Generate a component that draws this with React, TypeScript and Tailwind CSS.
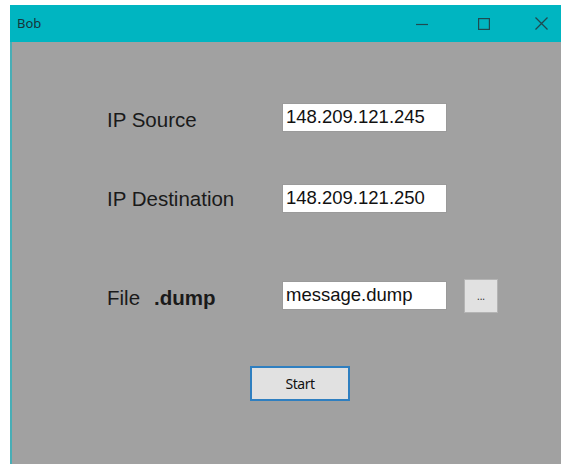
import React from "react";

function TitleButtons() {
  return (
    <div className="flex items-center h-full pr-[13px]">
      {/* minimize */}
      <svg width="12" height="12" viewBox="0 0 12 12">
        <line x1="0" y1="6.5" x2="12" y2="6.5" stroke="#1f4a50" strokeWidth="1.2" />
      </svg>
      {/* maximize */}
      <svg className="ml-[50px]" width="12" height="12" viewBox="0 0 12 12">
        <rect x="0.6" y="0.6" width="10.8" height="10.8" fill="none" stroke="#1f4a50" strokeWidth="1.2" />
      </svg>
      {/* close */}
      <svg className="ml-[45px]" width="13" height="13" viewBox="0 0 13 13">
        <path d="M0.5 0.5 L12.5 12.5 M12.5 0.5 L0.5 12.5" stroke="#1f4a50" strokeWidth="1.3" />
      </svg>
    </div>
  );
}

function TextBox({ value }: { value: string }) {
  return (
    <div className="w-[165px] h-[29px] bg-white border border-[#9a9a9a] flex items-center pl-[3px] text-[18.5px] text-[#111] leading-none" style={{ fontFamily: '"Liberation Sans", Arial, sans-serif' }}>
      {value}
    </div>
  );
}

export default function App() {
  const sans = { fontFamily: '"Liberation Sans", Arial, sans-serif' };
  return (
    <div className="w-[561px] h-[464px] bg-white pl-[10px] pt-[5px] overflow-hidden">
      <div className="flex flex-col h-full">
        {/* title bar */}
        <div className="h-[37px] bg-[#00b5c1] flex items-center justify-between shrink-0">
          <span className="pl-[7px] text-[13px] text-[#17343a]" style={{ fontFamily: '"Noto Sans", "Open Sans", sans-serif' }}>
            Bob
          </span>
          <TitleButtons />
        </div>
        {/* form body */}
        <div className="flex-1 bg-[#a1a1a1] border-l-2 border-[#48aeb6] pl-[95px]" style={sans}>
          <div className="flex items-center h-[29px] mt-[61px]">
            <div className="w-[175px] text-[20.5px] text-[#1a1a1a] leading-none pt-[5px]">IP Source</div>
            <TextBox value="148.209.121.245" />
          </div>
          <div className="flex items-center h-[30px] mt-[51px]">
            <div className="w-[175px] text-[20.5px] text-[#1a1a1a] leading-none pt-[2px]">IP Destination</div>
            <TextBox value="148.209.121.250" />
          </div>
          <div className="flex items-center h-[34px] mt-[66px]">
            <div className="w-[175px] flex items-baseline text-[20.5px] text-[#1a1a1a] leading-none pt-[4px]">
              <span>File</span>
              <span className="ml-[14px] font-bold">.dump</span>
            </div>
            <div className="mt-[-2px]">
              <TextBox value="message.dump" />
            </div>
            <div className="ml-[17px] w-[34px] h-[34px] bg-[#e1e1e1] border border-[#b4b4b4] flex items-center justify-center text-[10px] text-[#333]" style={{ fontFamily: '"Noto Sans", sans-serif' }}>
              ...
            </div>
          </div>
          <div className="mt-[53px] ml-[143px] w-[100px] h-[35px] bg-[#e1e1e1] border-2 border-[#2f7fc0] flex items-center justify-center text-[14px] text-[#111] tracking-[-0.5px]" style={{ fontFamily: '"Noto Sans", sans-serif' }}>
            Start
          </div>
        </div>
      </div>
    </div>
  );
}
